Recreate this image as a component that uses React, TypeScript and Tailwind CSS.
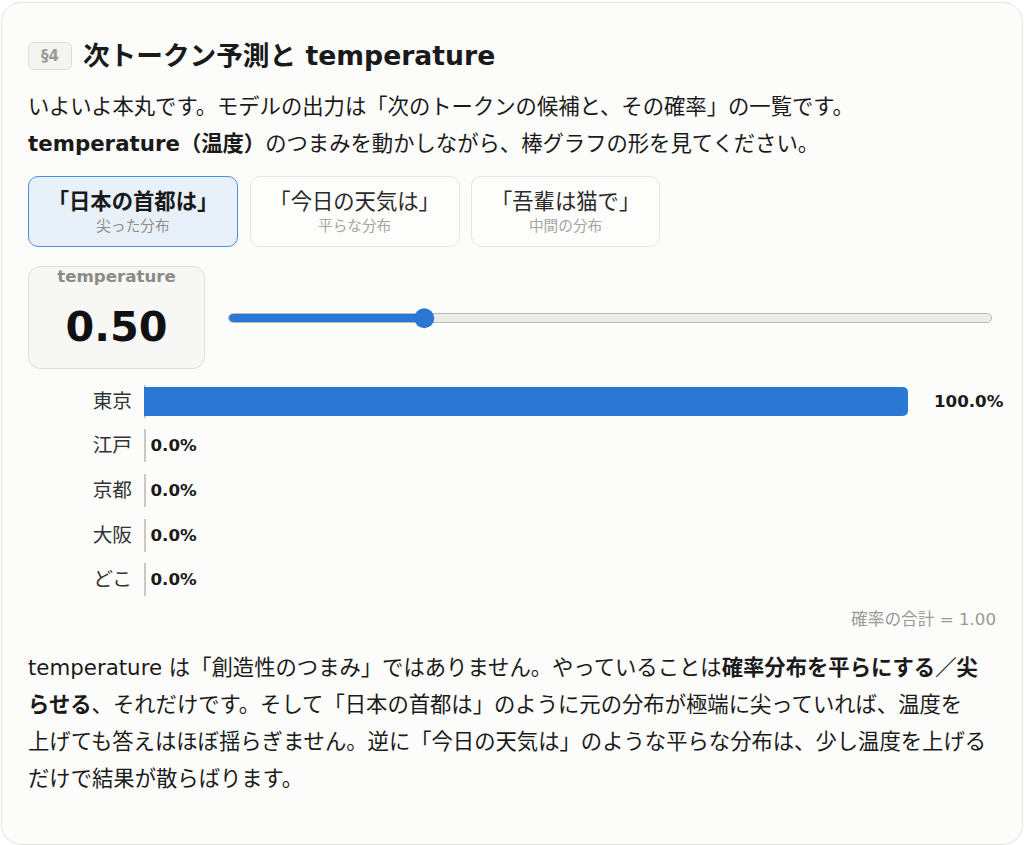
import React from "react";

const FONT = '"DejaVu Sans", "Noto Sans CJK JP", sans-serif';

const prompts = [
  { title: "「日本の首都は」", sub: "尖った分布", active: true },
  { title: "「今日の天気は」", sub: "平らな分布", active: false },
  { title: "「吾輩は猫で」", sub: "中間の分布", active: false },
];

const bars = [
  { label: "東京", p: 1 },
  { label: "江戸", p: 0 },
  { label: "京都", p: 0 },
  { label: "大阪", p: 0 },
  { label: "どこ", p: 0 },
];

const temp = 0.5;
const frac = temp / 2;

export default function App() {
  return (
    <div className="min-h-screen bg-white pt-[2px] px-[1px]" style={{ fontFamily: FONT }}>
      <div className="rounded-[20px] border border-[#e3e3e0] bg-[#fcfcfb] px-[26px] pt-[36px] pb-[46px] text-[#1a1a1a]">
        {/* Title */}
        <div className="flex h-[34px] items-center gap-[11px]">
          <span className="flex h-[27.3px] items-center rounded-[6px] border border-[#dddcd8] bg-[#f4f4f2] px-[12px] text-[15px] font-bold text-[#9a9994]">
            §4
          </span>
          <h2 className="text-[26.67px] font-bold leading-[34px]">次トークン予測と temperature</h2>
        </div>

        {/* Intro */}
        <p className="mt-[16px] text-[21.33px] leading-[36.8px]">
          いよいよ本丸です。モデルの出力は「次のトークンの候補と、その確率」の一覧です。
          <b className="whitespace-nowrap font-bold">temperature（温度）</b>
          のつまみを動かしながら、棒グラフの形を見てください。
        </p>

        {/* Prompt buttons */}
        <div className="mt-[13px] flex gap-[11.7px]">
          {prompts.map((b) => (
            <button
              key={b.title}
              className={
                b.active
                  ? "flex h-[71px] flex-col items-center rounded-[10px] border border-[#4a8fe0] bg-[#e8f0fa] px-[18.67px] pt-[12px]"
                  : "flex h-[71px] flex-col items-center rounded-[10px] border border-[#e5e5e2] bg-[#fdfdfc] px-[18.67px] pt-[12px]"
              }
            >
              <span
                className={
                  b.active
                    ? "text-[21.33px] font-bold leading-[26px] text-[#1a1a1a]"
                    : "text-[21.33px] font-normal leading-[26px] text-[#2a2a2a]"
                }
              >
                {b.title}
              </span>
              <span className={b.active ? "text-[14.67px] leading-[21px] text-[#8e8d88]" : "text-[14.67px] leading-[21px] text-[#a5a49f]"}>
                {b.sub}
              </span>
            </button>
          ))}
        </div>

        {/* Temperature control */}
        <div className="mt-[19px] flex items-center gap-[23.4px]">
          <div className="flex h-[103px] w-[177px] flex-col items-center rounded-[12px] border border-[#e0dfda] bg-[#f7f7f5]">
            <span className="pt-[1.5px] text-[16.67px] font-bold leading-[18px] text-[#8c8a84]">temperature</span>
            <span className="flex flex-1 items-center justify-center pt-[2px] text-[41.33px] font-bold leading-none text-[#111]">
              0.50
            </span>
          </div>
          <div className="relative mr-[4.3px] mt-[2px] flex h-[20px] flex-1 items-center">
            <div className="h-[10px] w-full overflow-hidden rounded-full border border-[#b9b9b6] bg-[#ececea]">
              <div
                className="h-full rounded-full bg-[#2b78d4]"
                style={{ width: `calc(9.75px + ${frac} * (100% - 19.5px))` }}
              />
            </div>
            <div
              className="absolute top-1/2 h-[19.5px] w-[19.5px] -translate-x-1/2 -translate-y-1/2 rounded-full bg-[#2b78d4]"
              style={{ left: `calc(9.75px + ${frac} * (100% - 19.5px))` }}
            />
          </div>
        </div>

        {/* Bars */}
        <div className="mt-[16px] flex flex-col gap-[11.7px]">
          {bars.map((r) => (
            <div key={r.label} className="flex h-[33px] items-center gap-[11.5px]">
              <span className="w-[104px] shrink-0 text-right text-[19.7px] leading-[33px] text-[#333]">{r.label}</span>
              <div className="flex h-[33px] min-w-0 flex-1 items-center border-l-2 border-[#c9c8c1]">
                <div
                  className="-ml-[2px] h-[29px] shrink-0 rounded-r-[5px] bg-[#2b78d4]"
                  style={{ width: `calc(${r.p} * (100% - 86px))` }}
                />
                <span
                  className="shrink-0 whitespace-nowrap text-[16.67px] font-bold text-[#1a1a1a]"
                  style={{ marginLeft: `${7 + r.p * 19}px` }}
                >
                  {(r.p * 100).toFixed(1)}%
                </span>
              </div>
            </div>
          ))}
        </div>

        <p className="mt-[14px] text-right text-[16.67px] leading-[20px] text-[#9a9994]">確率の合計 = 1.00</p>

        {/* Explanation */}
        <p className="mt-[20px] text-[21.33px] leading-[36.8px]">
          temperature は「創造性のつまみ」ではありません。やっていることは
          <b className="font-bold">確率分布を平らにする／尖らせる</b>
          、それだけです。そして「日本の首都は」のように元の分布が極端に尖っていれば、温度を
          <span className="whitespace-nowrap">上げても</span>
          答えはほぼ揺らぎません。逆に「今日の天気は」のような平らな分布は、少し温度を上げるだけで結果が散らばります。
        </p>
      </div>
    </div>
  );
}
